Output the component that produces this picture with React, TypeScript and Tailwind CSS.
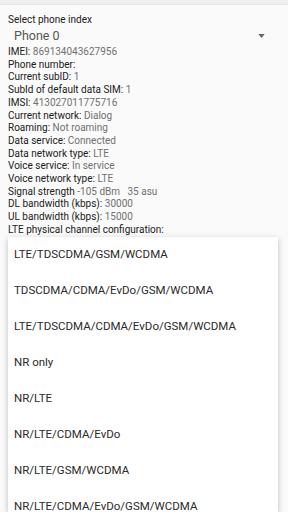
const info: [string, string][] = [
  ["IMEI:", "869134043627956"],
  ["Phone number:", ""],
  ["Current subID:", "1"],
  ["SubId of default data SIM:", "1"],
  ["IMSI:", "413027011775716"],
  ["Current network:", "Dialog"],
  ["Roaming:", "Not roaming"],
  ["Data service:", "Connected"],
  ["Data network type:", "LTE"],
  ["Voice service:", "In service"],
  ["Voice network type:", "LTE"],
  ["Signal strength", "-105 dBm   35 asu"],
  ["DL bandwidth (kbps):", "30000"],
  ["UL bandwidth (kbps):", "15000"],
  ["LTE physical channel configuration:", ""],
];

const options = [
  "LTE/TDSCDMA/GSM/WCDMA",
  "TDSCDMA/CDMA/EvDo/GSM/WCDMA",
  "LTE/TDSCDMA/CDMA/EvDo/GSM/WCDMA",
  "NR only",
  "NR/LTE",
  "NR/LTE/CDMA/EvDo",
  "NR/LTE/GSM/WCDMA",
  "NR/LTE/CDMA/EvDo/GSM/WCDMA",
];

export default function App() {
  return (
    <div
      className="relative w-[288px] h-[512px] overflow-hidden bg-[#fafafa] text-[#202020]"
      style={{ fontFamily: "Roboto, 'Noto Sans', sans-serif" }}
    >
      <div className="h-[5px] bg-[#efefef] border-b border-[#e4e4e4]" />
      <div className="px-2 pt-[9px]">
        <div className="text-[10px] leading-[12px]">Select phone index</div>
        <div className="flex items-center justify-between h-[20px] pl-[6px] pr-[15px]">
          <span className="text-[12.5px] text-[#555]">Phone 0</span>
          <svg width="7" height="4" viewBox="0 0 8 5">
            <path d="M0 0h8L4 5z" fill="#666" />
          </svg>
        </div>
        <div className="flex flex-col">
          {info.map(([k, v]) => (
            <div key={k} className="text-[10px] leading-[12.7px] whitespace-pre">
              {k} <span className="text-[#707070]">{v}</span>
            </div>
          ))}
        </div>
      </div>

      <div className="absolute left-2 top-[237px] w-[270px] bottom-0 bg-white shadow-[0_2px_6px_rgba(0,0,0,0.25)]">
        {options.map((o) => (
          <div key={o} className="h-9 flex items-center pl-[6px] text-[11.5px] text-[#2a2a2a]">
            {o}
          </div>
        ))}
      </div>
    </div>
  );
}
